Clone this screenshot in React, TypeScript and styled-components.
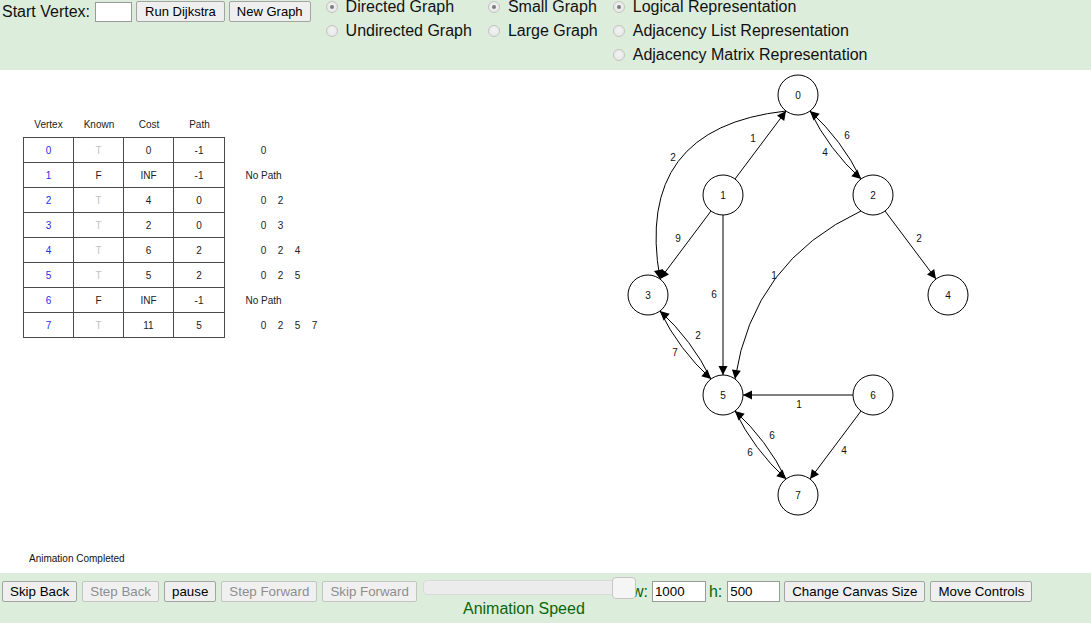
import React from "react";
import styled, { createGlobalStyle } from "styled-components";

const GREEN_BG = "#ddeddc";
const GREEN_TEXT = "#0b660b";

const GlobalStyle = createGlobalStyle`
  html, body { margin: 0; padding: 0; background: #ffffff; }
  body {
    font-family: "Liberation Sans", Arial, sans-serif;
    color: #111111;
    overflow: hidden;
  }
`;

/* ---------- top bar ---------- */

const TopBar = styled.div`
  height: 70px;
  background: ${GREEN_BG};
  display: flex;
  align-items: flex-start;
  gap: 15px;
  padding-left: 2px;
  box-sizing: border-box;
  overflow: hidden;
`;

const VertexControls = styled.div`
  display: flex;
  align-items: center;
  gap: 4px;
  padding-top: 1px;
  height: 21px;
`;

const BigLabel = styled.span<{ $green?: boolean }>`
  font-size: 16px;
  line-height: 21px;
  color: ${(p) => (p.$green ? GREEN_TEXT : "#111111")};
  white-space: nowrap;
`;

const TextField = styled.input<{ $w: number; $fs?: number }>`
  box-sizing: border-box;
  width: ${(p) => p.$w}px;
  height: ${(p) => (p.$fs ? 21 : 20)}px;
  border: 1px solid #9a9a9a;
  background: #ffffff;
  padding: 0 2px;
  margin: 0;
  font-family: "Liberation Sans", Arial, sans-serif;
  font-size: ${(p) => p.$fs ?? 13}px;
  color: #000000;
  outline: none;
`;

const Button = styled.button<{ $fs?: number; $px?: number }>`
  box-sizing: border-box;
  height: 21px;
  margin: 0;
  padding: 0 ${(p) => p.$px ?? 7}px;
  font-family: "Liberation Sans", Arial, sans-serif;
  font-size: ${(p) => p.$fs ?? 13}px;
  line-height: 19px;
  color: #000000;
  background: #efefef;
  border: 1px solid #a4a4a4;
  border-radius: 2px;
  white-space: nowrap;
  &:disabled {
    color: #8e8e8e;
    border-color: #c4c4c4;
    background: #f0f0f0;
  }
`;

const RadioColumn = styled.div<{ $ml?: number }>`
  display: flex;
  flex-direction: column;
  margin-top: -5px;
  margin-left: ${(p) => p.$ml ?? 0}px;
`;

const RadioRow = styled.label`
  display: flex;
  align-items: center;
  height: 24px;
  font-size: 16px;
  color: #111111;
  white-space: nowrap;
`;

const RadioMark = styled.span<{ $checked?: boolean }>`
  box-sizing: border-box;
  width: 12px;
  height: 12px;
  margin-right: 8px;
  border-radius: 50%;
  border: 1px solid #c3c3c3;
  background: radial-gradient(circle at 50% 40%, #f3f3f3 0%, #e4e4e4 100%);
  display: flex;
  align-items: center;
  justify-content: center;
  &::after {
    content: "";
    width: 4px;
    height: 4px;
    border-radius: 50%;
    background: ${(p) => (p.$checked ? "#7b7b7b" : "transparent")};
  }
`;

/* ---------- canvas area ---------- */

const CanvasArea = styled.div`
  height: 503px;
  display: flex;
  background: #ffffff;
`;

const LeftPanel = styled.div`
  width: 600px;
  flex-shrink: 0;
  box-sizing: border-box;
  padding: 47px 0 0 23px;
  display: flex;
  flex-direction: column;
`;

const CostTable = styled.div`
  display: grid;
  grid-template-columns: 51px 50px 50px 51px 140px;
  grid-template-rows: 20px 26px repeat(7, 25px);
  font-size: 10px;
  color: #222222;
`;

const HeadCell = styled.div`
  padding-top: 1px;
  line-height: 14px;
  text-align: center;
`;

type Tone = "blue" | "dim" | "plain";

const Cell = styled.div<{ $top?: boolean; $left?: boolean; $tone?: Tone }>`
  box-sizing: border-box;
  display: flex;
  align-items: center;
  justify-content: center;
  border-right: 1px solid #4a4a4a;
  border-bottom: 1px solid #4a4a4a;
  border-top: ${(p) => (p.$top ? "1px solid #4a4a4a" : "none")};
  border-left: ${(p) => (p.$left ? "1px solid #4a4a4a" : "none")};
  color: ${(p) =>
    p.$tone === "blue" ? "#2b2bea" : p.$tone === "dim" ? "#c2c2c2" : "#222222"};
`;

const PathCell = styled.div`
  display: flex;
  align-items: center;
  padding-left: 30px;
`;

const PathItem = styled.span`
  width: 17px;
  display: flex;
  justify-content: center;
  white-space: nowrap;
`;

const Status = styled.div`
  margin-top: auto;
  padding: 0 0 8px 6px;
  font-size: 10px;
  line-height: 12px;
  color: #111111;
`;

const GraphSvg = styled.svg`
  flex-shrink: 0;
  display: block;
`;

/* ---------- bottom bar ---------- */

const BottomBar = styled.div`
  height: 50px;
  box-sizing: border-box;
  background: ${GREEN_BG};
  display: flex;
  align-items: flex-start;
  padding: 8px 0 0 2px;
`;

const ButtonGroup = styled.div`
  display: flex;
  gap: 5px;
`;

const SliderCell = styled.div`
  width: 202px;
  margin: -1px 0 0 6px;
  display: flex;
  flex-direction: column;
  align-items: center;
`;

const SliderTrack = styled.div`
  position: relative;
  width: 202px;
  height: 15px;
  box-sizing: border-box;
  background: #ececec;
  border: 1px solid #dadada;
  border-radius: 4px;
`;

const SliderThumb = styled.div`
  position: absolute;
  right: -12px;
  top: -4px;
  width: 24px;
  height: 22px;
  box-sizing: border-box;
  background: #f5f5f5;
  border: 1px solid #c6c6c6;
  border-radius: 4px;
  z-index: 1;
`;

const SpeedLabel = styled.div`
  margin-top: 5px;
  font-size: 16px;
  color: ${GREEN_TEXT};
  white-space: nowrap;
`;

const SizeControls = styled.div`
  display: flex;
  align-items: center;
  height: 21px;
`;

const Spacer = styled.span<{ $w: number }>`
  display: block;
  width: ${(p) => p.$w}px;
  flex-shrink: 0;
`;

/* ---------- graph data ---------- */

type Pt = { x: number; y: number };
const R = 20;
const NODES: Pt[] = [
  { x: 798, y: 95 },
  { x: 723, y: 195 },
  { x: 873, y: 195 },
  { x: 648, y: 295 },
  { x: 948, y: 295 },
  { x: 723, y: 395 },
  { x: 873, y: 395 },
  { x: 798, y: 495 },
];

type EdgeDef = { from: number; to: number; bend: number; label: string; lx: number; ly: number };

const EDGES: EdgeDef[] = [
  { from: 1, to: 0, bend: 0, label: "1", lx: 753, ly: 138 },
  { from: 0, to: 2, bend: 8, label: "4", lx: 825, ly: 152 },
  { from: 2, to: 0, bend: 8, label: "6", lx: 847, ly: 135 },
  { from: 0, to: 3, bend: 112, label: "2", lx: 673, ly: 157 },
  { from: 1, to: 3, bend: 0, label: "9", lx: 678, ly: 238 },
  { from: 1, to: 5, bend: 0, label: "6", lx: 714, ly: 294 },
  { from: 2, to: 5, bend: 56, label: "1", lx: 774, ly: 275 },
  { from: 2, to: 4, bend: 0, label: "2", lx: 919, ly: 238 },
  { from: 3, to: 5, bend: 8, label: "7", lx: 675, ly: 352 },
  { from: 5, to: 3, bend: 8, label: "2", lx: 698, ly: 335 },
  { from: 6, to: 5, bend: 0, label: "1", lx: 799, ly: 404 },
  { from: 5, to: 7, bend: 8, label: "6", lx: 750, ly: 452 },
  { from: 7, to: 5, bend: 8, label: "6", lx: 772, ly: 435 },
  { from: 6, to: 7, bend: 0, label: "4", lx: 844, ly: 450 },
];

const ARROW_LEN = 9;
const ARROW_HALF = 4.5;

function edgeGeometry(e: EdgeDef) {
  const a = NODES[e.from];
  const b = NODES[e.to];
  const dx = b.x - a.x;
  const dy = b.y - a.y;
  const len = Math.hypot(dx, dy);
  const ux = dx / len;
  const uy = dy / len;
  const p0 = { x: a.x + ux * R, y: a.y + uy * R };
  const p2 = { x: b.x - ux * R, y: b.y - uy * R };
  let d: string;
  let tx = ux;
  let ty = uy;
  if (e.bend === 0) {
    d = `M ${p0.x} ${p0.y} L ${p2.x} ${p2.y}`;
  } else {
    const cx = (p0.x + p2.x) / 2 - uy * e.bend;
    const cy = (p0.y + p2.y) / 2 + ux * e.bend;
    d = `M ${p0.x} ${p0.y} Q ${cx} ${cy} ${p2.x} ${p2.y}`;
    const tl = Math.hypot(p2.x - cx, p2.y - cy);
    tx = (p2.x - cx) / tl;
    ty = (p2.y - cy) / tl;
  }
  const bx = p2.x - tx * ARROW_LEN;
  const by = p2.y - ty * ARROW_LEN;
  const nx = -ty;
  const ny = tx;
  const arrow = `${p2.x},${p2.y} ${bx + nx * ARROW_HALF},${by + ny * ARROW_HALF} ${bx - nx * ARROW_HALF},${by - ny * ARROW_HALF}`;
  return { d, arrow };
}

type RowData = { v: number; known: "T" | "F"; cost: string; path: string; route: string[] | null };

const ROWS: RowData[] = [
  { v: 0, known: "T", cost: "0", path: "-1", route: ["0"] },
  { v: 1, known: "F", cost: "INF", path: "-1", route: null },
  { v: 2, known: "T", cost: "4", path: "0", route: ["0", "2"] },
  { v: 3, known: "T", cost: "2", path: "0", route: ["0", "3"] },
  { v: 4, known: "T", cost: "6", path: "2", route: ["0", "2", "4"] },
  { v: 5, known: "T", cost: "5", path: "2", route: ["0", "2", "5"] },
  { v: 6, known: "F", cost: "INF", path: "-1", route: null },
  { v: 7, known: "T", cost: "11", path: "5", route: ["0", "2", "5", "7"] },
];

function Graph() {
  return (
    <GraphSvg width={400} height={503} viewBox="600 70 400 503">
      {EDGES.map((e, i) => {
        const g = edgeGeometry(e);
        return (
          <g key={i}>
            <path d={g.d} fill="none" stroke="#000" strokeWidth={1} />
            <polygon points={g.arrow} fill="#000" />
            <text
              x={e.lx}
              y={e.ly}
              fontFamily="'Liberation Sans', Arial, sans-serif"
              fontSize={10}
              textAnchor="middle"
              dominantBaseline="central"
              fill="#111"
            >
              {e.label}
            </text>
          </g>
        );
      })}
      {NODES.map((n, i) => (
        <g key={i}>
          <circle cx={n.x} cy={n.y} r={R} fill="#fff" stroke="#000" strokeWidth={1} />
          <text
            x={n.x}
            y={n.y}
            fontFamily="'Liberation Sans', Arial, sans-serif"
            fontSize={10}
            textAnchor="middle"
            dominantBaseline="central"
            fill="#111"
          >
            {i}
          </text>
        </g>
      ))}
    </GraphSvg>
  );
}

function Radio({ checked, children }: { checked?: boolean; children: React.ReactNode }) {
  return (
    <RadioRow>
      <RadioMark $checked={checked} />
      {children}
    </RadioRow>
  );
}

export default function App() {
  return (
    <>
      <GlobalStyle />
      <TopBar>
        <VertexControls>
          <BigLabel>Start Vertex:</BigLabel>
          <TextField $w={37} defaultValue="" style={{ marginLeft: 1 }} />
          <Button $px={8}>Run Dijkstra</Button>
          <Button>New Graph</Button>
        </VertexControls>
        <RadioColumn>
          <Radio checked>Directed Graph</Radio>
          <Radio>Undirected Graph</Radio>
        </RadioColumn>
        <RadioColumn $ml={1}>
          <Radio checked>Small Graph</Radio>
          <Radio>Large Graph</Radio>
        </RadioColumn>
        <RadioColumn>
          <Radio checked>Logical Representation</Radio>
          <Radio>Adjacency List Representation</Radio>
          <Radio>Adjacency Matrix Representation</Radio>
        </RadioColumn>
      </TopBar>

      <CanvasArea>
        <LeftPanel>
          <CostTable>
            <HeadCell>Vertex</HeadCell>
            <HeadCell>Known</HeadCell>
            <HeadCell>Cost</HeadCell>
            <HeadCell>Path</HeadCell>
            <HeadCell />
            {ROWS.map((r, i) => (
              <React.Fragment key={r.v}>
                <Cell $top={i === 0} $left $tone="blue">
                  {r.v}
                </Cell>
                <Cell $top={i === 0} $tone={r.known === "T" ? "dim" : "plain"}>
                  {r.known}
                </Cell>
                <Cell $top={i === 0}>{r.cost}</Cell>
                <Cell $top={i === 0}>{r.path}</Cell>
                <PathCell>
                  {r.route ? (
                    r.route.map((s, k) => <PathItem key={k}>{s}</PathItem>)
                  ) : (
                    <PathItem>No Path</PathItem>
                  )}
                </PathCell>
              </React.Fragment>
            ))}
          </CostTable>
          <Status>Animation Completed</Status>
        </LeftPanel>
        <Graph />
      </CanvasArea>

      <BottomBar>
        <ButtonGroup>
          <Button $fs={13.333}>Skip Back</Button>
          <Button $fs={13.333} disabled>
            Step Back
          </Button>
          <Button $fs={13.333}>pause</Button>
          <Button $fs={13.333} disabled>
            Step Forward
          </Button>
          <Button $fs={13.333} disabled>
            Skip Forward
          </Button>
        </ButtonGroup>
        <SliderCell>
          <SliderTrack>
            <SliderThumb />
          </SliderTrack>
          <SpeedLabel>Animation Speed</SpeedLabel>
        </SliderCell>
        <SizeControls>
          <Spacer $w={7} />
          <BigLabel $green>w:</BigLabel>
          <Spacer $w={4} />
          <TextField $w={54} $fs={13.333} defaultValue="1000" />
          <Spacer $w={3} />
          <BigLabel $green>h:</BigLabel>
          <Spacer $w={5} />
          <TextField $w={53} $fs={13.333} defaultValue="500" />
          <Spacer $w={4} />
          <Button $fs={13.333}>Change Canvas Size</Button>
          <Spacer $w={5} />
          <Button $fs={13.333}>Move Controls</Button>
        </SizeControls>
      </BottomBar>
    </>
  );
}
